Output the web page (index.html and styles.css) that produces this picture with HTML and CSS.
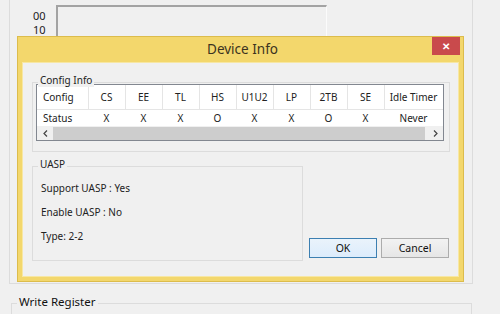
FILE: index.html
```html
<!DOCTYPE html>
<html lang="en">
<head>
    <meta charset="UTF-8">
    <title>Device Info</title>
    <link rel="stylesheet" href="styles.css">
</head>
<body>
    <div class="screen">
        <div class="panel">
            <div class="graph-row">
                <div class="axis"><span>00</span><span>10</span></div>
                <div class="graph"></div>
            </div>
        </div>
        <div class="write-group">
            <span class="write-label">Write Register</span>
        </div>

        <div class="dialog">
            <div class="titlebar">
                <div class="title">Device Info</div>
                <div class="close">&#x2715;</div>
            </div>
            <div class="content">
                <div class="group config-group">
                    <span class="group-label">Config Info</span>
                    <div class="list">
                        <table class="grid">
                            <colgroup>
                                <col class="c-first">
                                <col class="c"><col class="c"><col class="c"><col class="c">
                                <col class="c"><col class="c"><col class="c"><col class="c">
                                <col class="c-last">
                            </colgroup>
                            <tr class="head">
                                <td class="left">Config</td>
                                <td>CS</td><td>EE</td><td>TL</td><td>HS</td>
                                <td>U1U2</td><td>LP</td><td>2TB</td><td>SE</td>
                                <td>Idle Timer</td>
                            </tr>
                            <tr class="row">
                                <td class="left">Status</td>
                                <td>X</td><td>X</td><td>X</td><td>O</td>
                                <td>X</td><td>X</td><td>O</td><td>X</td>
                                <td>Never</td>
                            </tr>
                        </table>
                        <div class="hscroll">
                            <span class="arrow">
                                <svg width="5" height="7" viewBox="0 0 5 7"><path d="M4 0.5 L1 3.5 L4 6.5" fill="none" stroke="#444" stroke-width="1.2"/></svg>
                            </span>
                            <div class="thumb"></div>
                            <span class="arrow">
                                <svg width="5" height="7" viewBox="0 0 5 7"><path d="M1 0.5 L4 3.5 L1 6.5" fill="none" stroke="#444" stroke-width="1.2"/></svg>
                            </span>
                        </div>
                    </div>
                </div>

                <div class="bottom-row">
                    <div class="group uasp-group">
                        <span class="group-label">UASP</span>
                        <div class="line">Support UASP : Yes</div>
                        <div class="line">Enable UASP : No</div>
                        <div class="line">Type: 2-2</div>
                    </div>
                    <div class="buttons">
                        <button class="btn default">OK</button>
                        <button class="btn">Cancel</button>
                    </div>
                </div>
            </div>
        </div>
    </div>
</body>
</html>
```

FILE: styles.css
```css
* {
    box-sizing: border-box;
}
body {
    margin: 0;
    background-color: #f0f0f0;
    font-family: "Noto Sans", "Open Sans", sans-serif;
    font-size: 10px;
    color: #222;
}
.screen {
    position: relative;
    width: 500px;
    height: 314px;
    overflow: hidden;
}

/* window behind the dialog */
.panel {
    margin-left: 9px;
    width: 464px;
    height: 284px;
    border: 1px solid #dcdcdc;
    border-top: none;
}
.graph-row {
    display: flex;
    padding: 5px 0 0 23px;
}
.axis {
    width: 23px;
    padding-top: 4px;
    display: flex;
    flex-direction: column;
    font-size: 11px;
    line-height: 14px;
    color: #222;
}
.graph {
    width: 271px;
    height: 100px;
    border-top: 2px solid #a3a3a3;
    border-left: 2px solid #a3a3a3;
    border-right: 1px solid #fbfbfb;
}
.write-group {
    position: relative;
    margin: 19px 0 0 11px;
    width: 461px;
    height: 40px;
    border: 1px solid #dcdcdc;
}
.write-label {
    position: absolute;
    top: -10px;
    left: 5px;
    padding: 0 2px;
    background-color: #f0f0f0;
    font-size: 11.5px;
    line-height: 16px;
    color: #111;
}

/* dialog */
.dialog {
    position: absolute;
    left: 17px;
    top: 36px;
    width: 447px;
    height: 246px;
    background-color: #f3d76c;
    border: 1px solid #dcbc4c;
    padding: 0 4px 4px 4px;
    display: flex;
    flex-direction: column;
}
.titlebar {
    display: flex;
    height: 25px;
}
.title {
    flex: 1;
    padding-left: 31px;
    text-align: center;
    font-size: 13.5px;
    line-height: 25px;
    color: #3b3320;
}
.close {
    width: 28px;
    height: 18px;
    margin-right: -1px;
    background-color: #c94a4c;
    color: #fff;
    font-size: 10px;
    font-weight: bold;
    line-height: 18px;
    text-align: center;
}
.content {
    flex: 1;
    background-color: #f0f0f0;
    border: 1px solid #f7e7a4;
    padding: 19px 9px 0 9px;
}

/* group boxes */
.group {
    position: relative;
    border: 1px solid #dcdcdc;
}
.group-label {
    position: absolute;
    top: -10px;
    left: 5px;
    padding: 0 2px;
    background-color: #f0f0f0;
    line-height: 14px;
}
.config-group {
    width: 418px;
    height: 70px;
    padding: 1px 0 0 3px;
}
.list {
    width: 408px;
    height: 57px;
    border: 1px solid #828790;
    background-color: #fff;
    overflow: hidden;
}
.grid {
    table-layout: fixed;
    width: 406px;
    border-collapse: collapse;
    font-size: 10px;
}
.c-first {
    width: 51px;
}
.c {
    width: 37px;
}
.c-last {
    width: 59px;
}
.grid td {
    padding: 0;
    text-align: center;
    white-space: nowrap;
    overflow: hidden;
}
.grid td.left {
    text-align: left;
    padding-left: 6px;
}
.head td {
    height: 24px;
    border-right: 1px solid #e5e5e5;
    border-bottom: 1px solid #e5e5e5;
}
.row td {
    height: 16px;
    line-height: 16px;
}
.hscroll {
    display: flex;
    height: 15px;
    background-color: #f0f0f0;
}
.arrow {
    width: 16px;
    display: flex;
    align-items: center;
    justify-content: center;
}
.thumb {
    flex: 1;
    margin: 1px 2px 1px 0;
    background-color: #cdcdcd;
}

.bottom-row {
    display: flex;
    align-items: flex-end;
    margin-top: 14px;
}
.uasp-group {
    width: 273px;
    height: 95px;
    padding: 9px 0 0 8px;
}
.line {
    line-height: 24px;
}
.buttons {
    display: flex;
    gap: 4px;
    margin: 0 0 3px 6px;
}
.btn {
    width: 68px;
    height: 20px;
    padding: 0;
    font-family: "Noto Sans", "Open Sans", sans-serif;
    font-size: 10.5px;
    color: #111;
    background: linear-gradient(#f2f2f2, #e6e6e6);
    border: 1px solid #acacac;
}
.btn.default {
    border-color: #3c7fb1;
    background: linear-gradient(#eaf3fb, #dcecfc);
}
```
